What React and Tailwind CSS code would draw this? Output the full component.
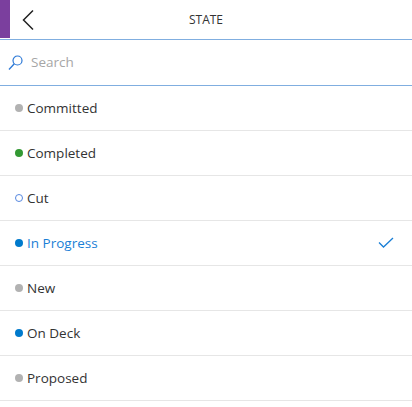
import React from 'react';

const states = [
  { name: 'Committed', dot: 'bg-[#b2b2b2]' },
  { name: 'Completed', dot: 'bg-[#339933]' },
  { name: 'Cut', dot: 'border border-[#5688e0] bg-white' },
  { name: 'In Progress', dot: 'bg-[#007acc]', selected: true },
  { name: 'New', dot: 'bg-[#b2b2b2]' },
  { name: 'On Deck', dot: 'bg-[#007acc]' },
  { name: 'Proposed', dot: 'bg-[#b2b2b2]' },
];

export default function App() {
  return (
    <div className="w-[412px] h-[407px] bg-white overflow-hidden font-['Segoe_UI','Open_Sans',sans-serif] text-[#333]">
      {/* Header */}
      <header className="flex h-[40px] items-stretch border-b border-[#80aee0]">
        <div className="w-[10px] bg-[#7b3f9e] mb-[1px]" />
        <button className="w-[36px] flex items-center justify-center">
          <svg width="14" height="22" viewBox="0 0 14 22" fill="none">
            <path d="M12 1.5 L2.5 11 L12 20.5" stroke="#222" strokeWidth="1.5" />
          </svg>
        </button>
        <div className="flex-1 flex items-center justify-center pr-[46px] text-[12px] text-[#333]">STATE</div>
      </header>

      {/* Search */}
      <div className="flex h-[46px] items-center border-b border-[#80aee0] pl-[8px] gap-[8px]">
        <svg width="15" height="16" viewBox="0 0 15 16" fill="none">
          <circle cx="9.5" cy="5.5" r="4.5" stroke="#2b78d6" strokeWidth="1.2" />
          <path d="M6.3 8.8 L1 14.5" stroke="#2b78d6" strokeWidth="1.3" />
        </svg>
        <span className="text-[13.5px] text-[#a6a6a6]">Search</span>
      </div>

      {/* List */}
      <ul>
        {states.map((s) => (
          <li key={s.name} className="flex h-[45px] items-center border-b border-[#e6e6e6] pl-[15px] pr-[18px]">
            <span className={`w-[8px] h-[8px] rounded-full ${s.dot}`} />
            <span className={`ml-[4px] text-[13.5px] ${s.selected ? 'text-[#1a7fd6]' : 'text-[#333]'}`}>{s.name}</span>
            {s.selected && (
              <svg className="ml-auto" width="16" height="12" viewBox="0 0 16 12" fill="none">
                <path d="M1 5.5 L5.5 10 L15 1" stroke="#1a7fd6" strokeWidth="1.3" />
              </svg>
            )}
          </li>
        ))}
      </ul>
    </div>
  );
}
